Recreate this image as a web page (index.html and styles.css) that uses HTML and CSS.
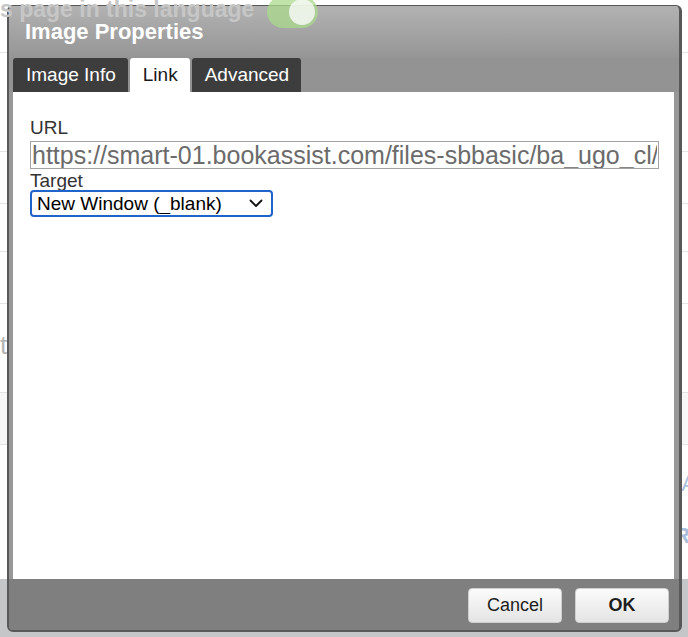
FILE: index.html
```html
<!DOCTYPE html>
<html>
  <head>
    <meta charset="utf-8">
    <meta name="viewport" content="width=device-width,initial-scale=1">
    <title>Image Properties</title>
    <link rel="stylesheet" href="styles.css">
  </head>
  <body>
    <div class="page">
      <div class="page-row page-top">
        <span class="page-title">s page in this language</span>
        <span class="toggle"><span class="toggle-knob"></span></span>
      </div>
      <div class="page-row" style="height: 99px"></div>
      <div class="page-row" style="height: 52px"></div>
      <div class="page-row" style="height: 48px"></div>
      <div class="page-row" style="height: 52px"></div>
      <div class="page-row page-label" style="height: 89px"><span>t</span></div>
      <div class="page-row page-shaded" style="height: 52px"></div>
      <div class="page-links">
        <span class="page-link">A</span>
        <span class="page-link page-link-bold">R,</span>
      </div>
    </div>
    <div class="page-foot"></div>

    <div class="dialog">
      <div class="dialog-title">Image Properties</div>
      <div class="tabs">
        <span class="tab">Image Info</span>
        <span class="tab tab-active">Link</span>
        <span class="tab">Advanced</span>
      </div>
      <div class="dialog-body">
        <label class="field-label" for="url">URL</label>
        <input class="field-input" id="url" type="text" value="https://smart-01.bookassist.com/files-sbbasic/ba_ugo_cl/images/">
        <label class="field-label" for="target">Target</label>
        <div class="select-wrap">
          <select class="field-select" id="target">
            <option>New Window (_blank)</option>
          </select>
          <svg class="select-arrow" width="14" height="9" viewBox="0 0 14 9">
            <path d="M1.5 1.5 L7 7 L12.5 1.5" fill="none" stroke="#111" stroke-width="1.8" stroke-linecap="round" stroke-linejoin="round"/>
          </svg>
        </div>
      </div>
      <div class="dialog-footer">
        <button class="btn">Cancel</button>
        <button class="btn btn-ok">OK</button>
      </div>
    </div>
  </body>
</html>
```

FILE: styles.css
```css
* {
  box-sizing: border-box;
  margin: 0;
  padding: 0;
}

body {
  background-color: #fff;
  font-family: "Liberation Sans", Arial, sans-serif;
  height: 637px;
  overflow: hidden;
  position: relative;
  width: 688px;
}

/* page behind the dialog */

.page {
  display: flex;
  flex-direction: column;
  height: 579px;
}

.page-row {
  border-bottom: 1px solid #e3e3e3;
  flex-shrink: 0;
}

.page-top {
  align-items: flex-start;
  display: flex;
  gap: 13px;
  height: 53px;
}

/* these two show through the dialog header */
.page-title,
.toggle {
  position: relative;
  z-index: 2;
}

.page-title {
  color: #c6c6c6;
  font-size: 23px;
  font-weight: bold;
  line-height: 25px;
  margin-top: -3px;
}

.toggle {
  align-items: center;
  background-color: rgba(170, 218, 140, 0.75);
  border-radius: 16px;
  display: flex;
  height: 32px;
  justify-content: flex-end;
  margin-top: -4px;
  padding: 3px;
  width: 51px;
}

.toggle-knob {
  background-color: rgba(250, 250, 250, 0.8);
  border-radius: 50%;
  height: 26px;
  width: 26px;
}

.page-label {
  color: #b5b5b5;
  font-size: 26px;
  padding-top: 26px;
}

.page-shaded {
  background-color: #f7f7f7;
}

.page-links {
  align-items: flex-end;
  display: flex;
  flex-direction: column;
  gap: 26px;
  padding-top: 26px;
}

.page-link {
  color: #a9bfdc;
  font-size: 22px;
  margin-right: -8px;
}

.page-link-bold {
  font-weight: bold;
}

.page-foot {
  background-color: #c5c6c7;
  height: 58px;
}

/* dialog */

.dialog {
  background-color: #989898;
  border-color: #585858;
  border-radius: 6px;
  border-style: solid;
  border-width: 1px 3px 2px 2px;
  display: flex;
  flex-direction: column;
  height: 627px;
  left: 7px;
  overflow: hidden;
  position: absolute;
  top: 5px;
  width: 675px;
}

.dialog-title {
  background: linear-gradient(#b2b2b2, #959595);
  color: #fff;
  font-size: 22px;
  font-weight: bold;
  height: 52px;
  padding: 13px 0 0 16px;
}

.tabs {
  background-color: #939393;
  display: flex;
  gap: 2px;
  height: 34px;
  padding-left: 4px;
}

.tab {
  background-color: #3d3d3d;
  border-radius: 3px 3px 0 0;
  color: #fff;
  font-size: 19px;
  line-height: 34px;
  padding: 0 12px 0 13px;
}

.tab-active {
  background-color: #fff;
  color: #1a1a1a;
}

.dialog-body {
  background-color: #fff;
  display: flex;
  flex: 1;
  flex-direction: column;
  margin: 0 5px 0 4px;
  padding: 25px 17px;
}

.field-label {
  color: #333;
  font-size: 19px;
  line-height: 21px;
}

.field-input {
  border: 1px solid #a3a3a3;
  color: #6b6b6b;
  font-family: "Liberation Sans", Arial, sans-serif;
  font-size: 25px;
  height: 28px;
  margin: 3px 0 1px;
  outline: none;
  padding: 0 1px;
  width: 629px;
}

.select-wrap {
  margin-top: -1px;
  position: relative;
  width: 243px;
}

.field-select {
  appearance: none;
  background-color: #fff;
  border: 2px solid #1f63cc;
  border-radius: 4px;
  color: #000;
  font-family: "Liberation Sans", Arial, sans-serif;
  font-size: 19px;
  height: 27px;
  padding: 0 0 0 5px;
  width: 100%;
}

.select-arrow {
  position: absolute;
  right: 10px;
  top: 9px;
}

.dialog-footer {
  background-color: #7f7f7f;
  display: flex;
  gap: 13px;
  height: 51px;
  justify-content: flex-end;
  padding: 9px 10px 0 0;
}

.btn {
  background: linear-gradient(#fbfbfb, #e4e4e4);
  border: 1px solid #cfcfcf;
  border-radius: 4px;
  color: #1e1e1e;
  font-family: "Liberation Sans", Arial, sans-serif;
  font-size: 18px;
  height: 35px;
  width: 94px;
}

.btn-ok {
  font-weight: bold;
}
```
